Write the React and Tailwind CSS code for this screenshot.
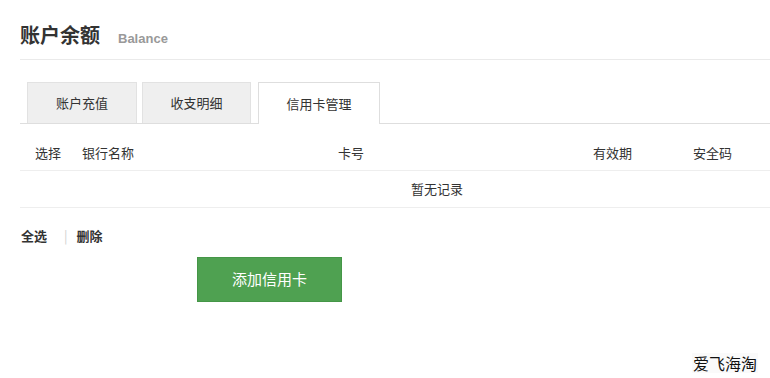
import React from "react";

const font = { fontFamily: '"Noto Sans CJK SC", "Liberation Sans", sans-serif' };

export default function App() {
  return (
    <div
      className="relative w-[770px] h-[378px] overflow-hidden bg-white text-[#333]"
      style={font}
    >
      <div className="pl-[20px]">
        <div className="flex items-baseline pt-[21px]">
          <h1 className="text-[20px] font-bold leading-[28px] text-[#333] w-[80px] whitespace-nowrap">账户余额</h1>
          <span className="ml-[18px] text-[13px] font-bold text-[#999] whitespace-nowrap" style={{ fontFamily: '"Liberation Sans", Arial, sans-serif' }}>
            Balance
          </span>
        </div>
        <div className="mt-[10px] border-b border-[#eaeaea]" />

        <div className="mt-[22px] flex items-end h-[42px] border-b border-[#dedede] pl-[7px]">
          <div className="w-[110px] h-[41px] flex items-center justify-center bg-[#efefef] border border-b-0 border-[#e2e2e2] text-[13px] text-[#333]">
            账户充值
          </div>
          <div className="ml-[5px] w-[109px] h-[41px] flex items-center justify-center bg-[#efefef] border border-b-0 border-[#e2e2e2] text-[13px] text-[#333]">
            收支明细
          </div>
          <div className="ml-[7px] w-[122px] h-[42px] -mb-px flex items-center justify-center bg-white border border-b-0 border-[#dedede] text-[13px] text-[#333]">
            信用卡管理
          </div>
        </div>

        <div className="mt-[12px] flex items-center h-[35px] border-b border-[#eeeeee] text-[13px] text-[#333] whitespace-nowrap">
          <div className="w-[62px] pl-[15px]">选择</div>
          <div className="w-[256px]">银行名称</div>
          <div className="w-[255px]">卡号</div>
          <div className="w-[100px]">有效期</div>
          <div>安全码</div>
        </div>
        <div className="flex items-center h-[37px] border-b border-[#eeeeee] text-[13px] text-[#333]">
          <div className="pl-[391px] whitespace-nowrap">暂无记录</div>
        </div>

        <div className="mt-[18px] flex items-center h-[20px] text-[13px] font-bold text-[#333] whitespace-nowrap">
          <span className="ml-px">全选</span>
          <span className="ml-[17px] font-normal text-[#d0d0d0]">|</span>
          <span className="ml-[9px]">删除</span>
        </div>

        <div className="mt-[11px] ml-[177px]">
          <button className="w-[145px] h-[45px] bg-[#4fa151] border border-[#459647] text-white text-[15px] flex items-center justify-center">
            添加信用卡
          </button>
        </div>
      </div>

      <div className="absolute right-[12px] bottom-[5px] text-[16px] text-[#111] leading-[20px] bg-[#fafafa] px-[1px]">
        爱飞海淘
      </div>
    </div>
  );
}
